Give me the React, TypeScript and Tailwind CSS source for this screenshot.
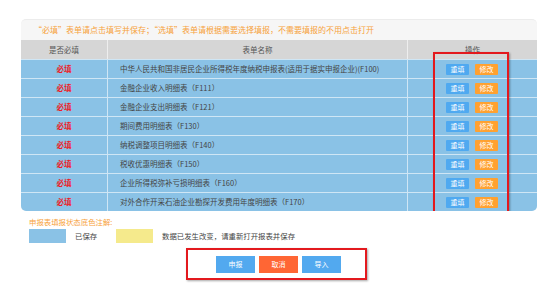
import React from 'react';

const FONT = '"Noto Sans CJK SC", "Liberation Sans", sans-serif';

const ROWS = [
  '中华人民共和国非居民企业所得税年度纳税申报表(适用于据实申报企业)(F100)',
  '金融企业收入明细表（F111）',
  '金融企业支出明细表（F121）',
  '期间费用明细表（F130）',
  '纳税调整项目明细表（F140）',
  '税收优惠明细表（F150）',
  '企业所得税弥补亏损明细表（F160）',
  '对外合作开采石油企业勘探开发费用年度明细表（F170）',
];

function SmallButton({ label, color }: { label: string; color: string }) {
  return (
    <span
      className={`flex h-[11px] w-[23px] items-center justify-center rounded-[1px] text-[7px] leading-none text-white ${color}`}
    >
      {label}
    </span>
  );
}

export default function App() {
  return (
    <div className="h-[283px] w-[557px] overflow-hidden bg-white" style={{ fontFamily: FONT }}>
      <div className="pl-[21px] pt-[19px]">
        <div className="relative w-[516px] overflow-hidden rounded-[5px] border-t border-[#ececec] bg-[#f6f6f6]">
          <div className="flex h-[20px] items-center pl-[13px] text-[8px] text-[#f7a23b]">
            “必填”表单请点击填写并保存；“选填”表单请根据需要选择填报，不需要填报的不用点击打开
          </div>
          <div className="grid h-[19px] grid-cols-[87px_300px_1fr] bg-[#d6d6d6] text-[7.5px] text-[#555]">
            <div className="flex items-center justify-center border-r border-[#eeeeee]">是否必填</div>
            <div className="flex items-center justify-center border-r border-[#eeeeee]">表单名称</div>
            <div className="flex items-center justify-center">操作</div>
          </div>
          {ROWS.map((name) => (
            <div
              key={name}
              className="grid h-[19px] grid-cols-[87px_300px_1fr] border-t border-[#cfe6f5] bg-[#8ac2e6] text-[7.5px]"
            >
              <div className="flex items-center justify-center border-r border-[#cfe6f5] font-bold text-[#ee1c25]">
                必填
              </div>
              <div className="flex items-center border-r border-[#cfe6f5] pl-[12px] text-[#444]">{name}</div>
              <div className="flex items-center gap-[6px] pl-[38px]">
                <SmallButton label="重填" color="bg-[#4fa9f0]" />
                <SmallButton label="修改" color="bg-[#ffa130]" />
              </div>
            </div>
          ))}
          <div className="pointer-events-none absolute left-[412px] top-[32px] h-[165px] w-[76px] border-2 border-[#e3191e] shadow-[1px_1px_2px_rgba(0,0,0,0.35)]" />
        </div>
        <div className="relative ml-[8px] mt-[6px] text-[7.4px] leading-[10px] text-[#f7a23b]">申报表填报状态底色注解:</div>
        <div className="ml-[8px] mt-[2px] flex h-[14px] items-center text-[7.4px] text-[#444]">
          <span className="h-[14px] w-[37px] bg-[#8ac2e6]" />
          <span className="ml-[9px] w-[41px]">已保存</span>
          <span className="h-[14px] w-[37px] bg-[#f5ea8c]" />
          <span className="ml-[9px]">数据已发生改变，请重新打开报表并保存</span>
        </div>
      </div>
      <div className="ml-[186px] mt-[5px] flex h-[32px] w-[181px] items-center gap-[4px] border-2 border-[#e3191e] pl-[28px] shadow-[1px_1px_2px_rgba(0,0,0,0.35)]">
        <span className="flex h-[17px] w-[39px] items-center justify-center bg-[#52a9ef] text-[7px] text-white">申报</span>
        <span className="flex h-[17px] w-[39px] items-center justify-center bg-[#ff6634] text-[7px] text-white">取消</span>
        <span className="flex h-[17px] w-[39px] items-center justify-center bg-[#52a9ef] text-[7px] text-white">导入</span>
      </div>
    </div>
  );
}
